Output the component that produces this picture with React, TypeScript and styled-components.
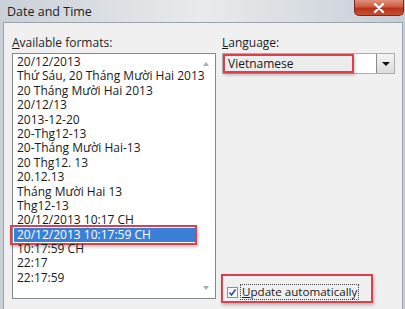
import React from 'react';
import styled, { createGlobalStyle } from 'styled-components';

const formats = [
  '20/12/2013',
  'Thứ Sáu, 20 Tháng Mười Hai 2013',
  '20 Tháng Mười Hai 2013',
  '20/12/13',
  '2013-12-20',
  '20-Thg12-13',
  '20-Tháng Mười Hai-13',
  '20 Thg12. 13',
  '20.12.13',
  'Tháng Mười Hai 13',
  'Thg12-13',
  '20/12/2013 10:17 CH',
  '20/12/2013 10:17:59 CH',
  '10:17:59 CH',
  '22:17',
  '22:17:59',
];
const selected = 12;

const Global = createGlobalStyle`
  html, body { margin: 0; padding: 0; }
  body {
    width: 405px;
    height: 309px;
    overflow: hidden;
    font-family: "Open Sans", "Noto Sans", sans-serif;
  }
`;

const Window = styled.div`
  width: 405px;
  height: 309px;
  overflow: hidden;
  display: flex;
  flex-direction: column;
  background: linear-gradient(90deg, #c9d0d8 0%, #dde1e5 30%, #e9eaeb 50%, #d8dde2 75%, #c6cdd5 100%);
`;

const TitleBar = styled.div`
  height: 22px;
  flex: none;
  display: flex;
  justify-content: space-between;
  align-items: flex-start;
`;

const Title = styled.div`
  padding: 3px 0 0 7px;
  font-size: 12.5px;
  color: #1e1e1e;
`;

const Close = styled.div`
  width: 50px;
  height: 16px;
  margin-right: 1px;
  border: 1px solid #7a2a1e;
  border-top: none;
  border-radius: 0 0 5px 5px;
  background: linear-gradient(#e0917c 0%, #cf5a40 45%, #b8321c 55%, #c8502f 100%);
  display: flex;
  align-items: center;
  justify-content: center;
  box-sizing: border-box;
`;

const Panel = styled.div`
  flex: 1;
  margin: 0 2px 0 3px;
  border: 1px solid #9aa3ad;
  border-bottom: none;
  background: #f0f0f0;
  padding: 12px 7px 0 8px;
  display: grid;
  grid-template-columns: 204px 173px;
  column-gap: 6px;
  min-height: 0;
`;

const Column = styled.div`
  display: flex;
  flex-direction: column;
  min-height: 0;
  min-width: 0;
`;

const Label = styled.div`
  font-size: 12px;
  line-height: 16px;
  color: #1e1e1e;
  margin-bottom: 2px;
  span { text-decoration: underline; }
`;

const ListBox = styled.div`
  height: 246px;
  border: 1px solid #828790;
  background: #fff;
  display: flex;
  box-sizing: border-box;
`;

const Items = styled.div`
  flex: 1;
  min-width: 0;
  padding: 1px 0 0 1px;
`;

const Item = styled.div<{ $on?: boolean }>`
  position: relative;
  height: 14.4px;
  line-height: 14.4px;
  padding-left: 3px;
  font-size: 12px;
  white-space: nowrap;
  color: ${p => (p.$on ? '#fff' : '#1a1a1a')};
  background: ${p => (p.$on ? '#3a7fd5' : 'transparent')};
`;

const ScrollBar = styled.div`
  flex: none;
  width: 19px;
  display: flex;
  flex-direction: column;
  justify-content: space-between;
  align-items: center;
  padding: 8px 0 8px;
  box-sizing: border-box;
`;

const Arrow = styled.div<{ $down?: boolean }>`
  width: 0;
  height: 0;
  border-left: 3.5px solid transparent;
  border-right: 3.5px solid transparent;
  ${p => (p.$down ? 'border-top: 4px solid #a8acb2;' : 'border-bottom: 4px solid #a8acb2;')}
`;

const Mark = styled.div<{ $t: number; $r: number; $b: number; $l: number }>`
  position: absolute;
  top: ${p => p.$t}px;
  right: ${p => p.$r}px;
  bottom: ${p => p.$b}px;
  left: ${p => p.$l}px;
  border: 2px solid #d8414d;
  box-shadow: 1px 2px 3px rgba(0, 0, 0, 0.25);
  pointer-events: none;
`;

const Combo = styled.div`
  height: 21px;
  border: 1px solid #abadb3;
  background: #fff;
  display: flex;
  box-sizing: border-box;
`;

const ComboText = styled.div`
  flex: 1;
  position: relative;
  font-size: 12px;
  line-height: 19px;
  padding-left: 5px;
  color: #1a1a1a;
`;

const Selection = styled.div`
  position: absolute;
  top: 1px;
  bottom: 1px;
  left: 1px;
  right: 23px;
  background: #ececec;
`;

const ComboLabel = styled.span`
  position: relative;
`;

const DropButton = styled.div`
  width: 17px;
  border-left: 1px solid #8a8a8a;
  background: linear-gradient(#f4f4f4, #dcdcdc);
  display: flex;
  align-items: center;
  justify-content: center;
`;

const DownTri = styled.div`
  width: 0;
  height: 0;
  border-left: 4px solid transparent;
  border-right: 4px solid transparent;
  border-top: 4px solid #111;
`;

const CheckRow = styled.div`
  position: relative;
  align-self: flex-start;
  margin-top: auto;
  margin-bottom: 8px;
  margin-left: 5px;
  display: flex;
  align-items: center;
  gap: 2px;
  height: 18px;
`;

const Box = styled.div`
  width: 11px;
  height: 11px;
  border: 1px solid #8e8f8f;
  background: linear-gradient(135deg, #f2f2f2, #fff);
  box-sizing: border-box;
  display: flex;
  align-items: center;
  justify-content: center;
`;

const CheckText = styled.div`
  font-size: 11.6px;
  line-height: 14px;
  padding: 0 1px;
  border: 1px dotted #444;
  color: #1a1a1a;
  span { text-decoration: underline; }
`;

export default function App() {
  return (
    <>
      <Global />
      <Window>
        <TitleBar>
          <Title>Date and Time</Title>
          <Close>
            <svg width="12" height="10" viewBox="0 0 12 10">
              <path d="M2 1 L10 9 M10 1 L2 9" stroke="#fff" strokeWidth="2.4" strokeLinecap="round" />
            </svg>
          </Close>
        </TitleBar>
        <Panel>
          <Column>
            <Label><span>A</span>vailable formats:</Label>
            <ListBox>
              <Items>
                {formats.map((f, i) => (
                  <Item key={i} $on={i === selected}>
                    {f}
                    {i === selected && <Mark $t={-3} $r={-1} $b={-3} $l={-4} />}
                  </Item>
                ))}
              </Items>
              <ScrollBar>
                <Arrow />
                <Arrow $down />
              </ScrollBar>
            </ListBox>
          </Column>
          <Column>
            <Label><span>L</span>anguage:</Label>
            <Combo>
              <ComboText>
                <Selection />
                <ComboLabel>Vietnamese</ComboLabel>
                <Mark $t={0} $r={22} $b={0} $l={0} />
              </ComboText>
              <DropButton>
                <DownTri />
              </DropButton>
            </Combo>
            <CheckRow>
              <Box>
                <svg width="9" height="9" viewBox="0 0 9 9">
                  <path d="M1.5 4.5 L3.5 7 L7.5 1.5" stroke="#2b4f9e" strokeWidth="1.6" fill="none" />
                </svg>
              </Box>
              <CheckText><span>U</span>pdate automatically</CheckText>
              <Mark $t={-9} $r={-14} $b={-2} $l={-6} />
            </CheckRow>
          </Column>
        </Panel>
      </Window>
    </>
  );
}
